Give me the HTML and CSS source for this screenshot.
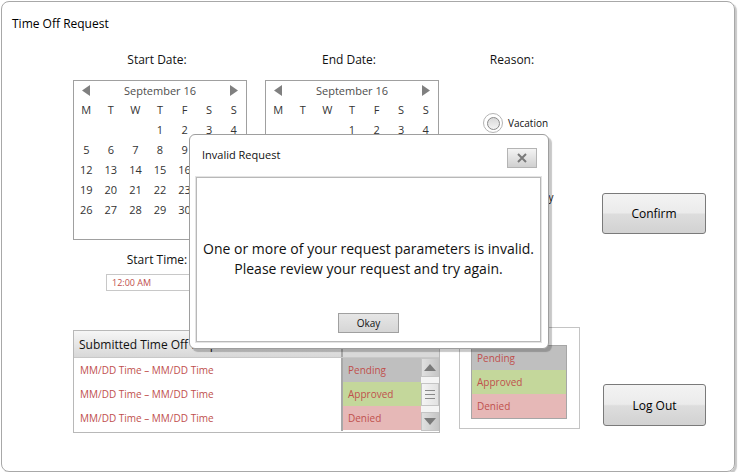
FILE: index.html
```html
<!DOCTYPE html>
<html>
<head>
<meta charset="utf-8">
<link rel="stylesheet" href="styles.css">
</head>
<body>
<div class="frame">
  <h1 class="title">Time Off Request</h1>
  <div class="top">
    <div class="datecol">
      <div class="label">Start Date:</div>
      <div class="cal">
        <div class="arrow"><svg width="8" height="11" viewBox="0 0 8 11"><polygon points="8,0 8,11 0,5.5" fill="#808080"/></svg></div>
        <div class="month">September 16</div>
        <div class="arrow"><svg width="8" height="11" viewBox="0 0 8 11"><polygon points="0,0 0,11 8,5.5" fill="#808080"/></svg></div>
        <span>M</span><span>T</span><span>W</span><span>T</span><span>F</span><span>S</span><span>S</span>
        <span></span><span></span><span></span><span>1</span><span>2</span><span>3</span><span>4</span>
        <span>5</span><span>6</span><span>7</span><span>8</span><span>9</span><span>10</span><span>11</span>
        <span>12</span><span>13</span><span>14</span><span>15</span><span>16</span><span>17</span><span>18</span>
        <span>19</span><span>20</span><span>21</span><span>22</span><span>23</span><span>24</span><span>25</span>
        <span>26</span><span>27</span><span>28</span><span>29</span><span>30</span>
      </div>
      <div class="label time-label">Start Time:</div>
      <div class="timebox">12:00 AM</div>
    </div>
    <div class="datecol second">
      <div class="label">End Date:</div>
      <div class="cal">
        <div class="arrow"><svg width="8" height="11" viewBox="0 0 8 11"><polygon points="8,0 8,11 0,5.5" fill="#808080"/></svg></div>
        <div class="month">September 16</div>
        <div class="arrow"><svg width="8" height="11" viewBox="0 0 8 11"><polygon points="0,0 0,11 8,5.5" fill="#808080"/></svg></div>
        <span>M</span><span>T</span><span>W</span><span>T</span><span>F</span><span>S</span><span>S</span>
        <span></span><span></span><span></span><span>1</span><span>2</span><span>3</span><span>4</span>
        <span>5</span><span>6</span><span>7</span><span>8</span><span>9</span><span>10</span><span>11</span>
        <span>12</span><span>13</span><span>14</span><span>15</span><span>16</span><span>17</span><span>18</span>
        <span>19</span><span>20</span><span>21</span><span>22</span><span>23</span><span>24</span><span>25</span>
        <span>26</span><span>27</span><span>28</span><span>29</span><span>30</span>
      </div>
      <div class="label time-label">End Time:</div>
      <div class="timebox">12:00 AM</div>
    </div>
    <div class="reason">
      <div class="label reason-label">Reason:</div>
      <div class="radio first"><span class="dot"></span><span class="rlabel">Vacation</span></div>
      <div class="radio second-radio"><span class="dot"></span><span class="rlabel wide">Sick Day</span></div>
    </div>
    <div class="actions">
      <button class="btn">Confirm</button>
    </div>
  </div>
  <div class="bottom">
    <div class="list">
      <div class="list-head">
        <div class="h-text">Submitted Time Off Requests</div>
        <div class="h-status"></div>
      </div>
      <div class="list-body">
        <div class="rows">
          <div class="row">MM/DD Time – MM/DD Time</div>
          <div class="row">MM/DD Time – MM/DD Time</div>
          <div class="row">MM/DD Time – MM/DD Time</div>
        </div>
        <div class="status">
          <div class="st pending">Pending</div>
          <div class="st approved">Approved</div>
          <div class="st denied">Denied</div>
        </div>
        <div class="scroll">
          <div class="sbtn"><svg width="12" height="7" viewBox="0 0 12 7"><polygon points="0,7 12,7 6,0" fill="#7a7a7a"/></svg></div>
          <div class="thumb"><i></i><i></i><i></i></div>
          <div class="sbtn"><svg width="12" height="7" viewBox="0 0 12 7"><polygon points="0,0 12,0 6,7" fill="#7a7a7a"/></svg></div>
        </div>
      </div>
    </div>
    <div class="legend">
      <div class="legend-rows">
        <div class="st pending">Pending</div>
        <div class="st approved">Approved</div>
        <div class="st denied">Denied</div>
      </div>
    </div>
    <div class="logout">
      <button class="btn btn-out">Log Out</button>
    </div>
  </div>

  <div class="dialog">
    <div class="dlg-head">
      <div class="dlg-title">Invalid Request</div>
      <button class="close"><svg width="10" height="10" viewBox="0 0 10 10"><path d="M1 1L9 9M9 1L1 9" stroke="#7a7a7a" stroke-width="2"/></svg></button>
    </div>
    <div class="dlg-panel">
      <p class="msg">One or more of your request parameters is invalid.<br>Please review your request and try again.</p>
      <button class="okay">Okay</button>
    </div>
  </div>
</div>
</body>
</html>
```
FILE: styles.css
```css
body {
  margin: 0;
  background: #fff;
  font-family: "Open Sans", "Noto Sans", sans-serif;
  color: #1a1a1a;
}
.frame {
  position: relative;
  box-sizing: border-box;
  margin: 1px 0 0 1px;
  width: 734px;
  height: 471px;
  border: 1px solid #a8a8a8;
  border-radius: 8px;
  box-shadow: 2px 2px 1px #c8c8c8;
}
.title {
  margin: 0;
  padding: 14px 0 0 10px;
  font-size: 12px;
  line-height: 16px;
  font-weight: normal;
  color: #000;
}
.top {
  display: flex;
  align-items: flex-start;
  margin-top: 20px;
  padding-left: 71px;
}
.datecol {
  width: 174px;
  display: flex;
  flex-direction: column;
  align-items: center;
}
.datecol.second {
  margin-left: 18px;
}
.label {
  font-size: 12px;
  line-height: 16px;
  padding-right: 6px;
  color: #111;
}
.reason-label {
  padding-right: 0;
  padding-left: 6px;
}
.cal {
  margin-top: 12px;
  box-sizing: border-box;
  width: 174px;
  height: 160px;
  border: 1px solid #a0a0a0;
  display: grid;
  grid-template-columns: repeat(7, 1fr);
  grid-template-rows: 18px;
  grid-auto-rows: 20px;
  font-size: 11px;
  color: #333;
}
.cal span, .cal .arrow, .cal .month {
  display: flex;
  align-items: center;
  justify-content: center;
}
.cal .month {
  grid-column: 2 / 7;
  color: #4d4d4d;
}
.time-label {
  margin-top: 12px;
}
.timebox {
  margin-top: 6px;
  box-sizing: border-box;
  width: 107px;
  height: 17px;
  border: 1px solid #c8c8c8;
  font-size: 9px;
  line-height: 15px;
  padding-left: 5px;
  color: #c0504d;
  margin-right: 1px;
}
.reason {
  margin-left: 31px;
  width: 78px;
  display: flex;
  flex-direction: column;
  align-items: center;
}
.radio {
  align-self: flex-start;
  margin-left: 13px;
  display: flex;
  align-items: center;
}
.radio.first {
  margin-top: 45px;
}
.radio.second-radio {
  margin-top: 54px;
}
.dot {
  box-sizing: border-box;
  width: 20px;
  height: 20px;
  border: 1px solid #b4b4b4;
  border-radius: 50%;
  background: #fff;
  display: flex;
  align-items: center;
  justify-content: center;
}
.dot::after {
  content: "";
  box-sizing: border-box;
  width: 13px;
  height: 13px;
  border: 1px solid #8a8a8a;
  border-radius: 50%;
  background: linear-gradient(#d8d8d8, #f4f4f4);
}
.rlabel {
  margin-left: 5px;
  font-size: 10px;
  color: #111;
  white-space: nowrap;
}
.rlabel.wide {
  margin-left: 12px;
}
.actions {
  margin-left: 54px;
  padding-top: 141px;
}
.btn {
  box-sizing: border-box;
  width: 104px;
  height: 41px;
  border: 1px solid #7a7a7a;
  border-radius: 3px;
  background: linear-gradient(#f3f3f3 0%, #ebebeb 48%, #dddddd 52%, #d2d2d2 100%);
  font-family: "Open Sans", "Noto Sans", sans-serif;
  font-size: 12px;
  color: #000;
  padding: 0;
}
.bottom {
  display: flex;
  align-items: flex-start;
  margin-top: 36px;
  padding-left: 71px;
}
.list {
  margin-top: 3px;
  box-sizing: border-box;
  width: 367px;
  height: 103px;
  border: 1px solid #b8b8b8;
}
.list-head {
  display: flex;
  height: 27px;
  box-sizing: border-box;
  border-bottom: 1px solid #c8c8c8;
  background: linear-gradient(#f6f6f6, #d8d8d8);
}
.h-text {
  width: 267px;
  font-size: 12px;
  line-height: 27px;
  padding-left: 5px;
  box-sizing: border-box;
  white-space: nowrap;
  overflow: hidden;
  color: #111;
}
.h-status {
  flex: 1;
  border-left: 2px solid #a8a8a8;
  background: #d9d9d9;
}
.list-body {
  display: flex;
}
.rows {
  width: 267px;
}
.row {
  height: 24px;
  line-height: 24px;
  padding-left: 6px;
  font-size: 10px;
  color: #c0504d;
}
.status {
  width: 78px;
  border-left: 2px solid #a8a8a8;
}
.st {
  height: 24px;
  line-height: 24px;
  padding-left: 5px;
  font-size: 10px;
  color: #c0504d;
}
.pending { background: #bfbfbf; }
.approved { background: #c4d79b; }
.denied { background: #e6b8b7; }
.scroll {
  width: 18px;
  height: 73px;
  display: flex;
  flex-direction: column;
  justify-content: space-between;
  background: #f4f4f4;
}
.sbtn {
  box-sizing: border-box;
  height: 19px;
  border: 1px solid #c4c4c4;
  background: linear-gradient(90deg, #e0e0e0, #c6c6c6);
  display: flex;
  align-items: center;
  justify-content: center;
}
.thumb {
  box-sizing: border-box;
  height: 23px;
  border: 1px solid #c4c4c4;
  background: linear-gradient(90deg, #f4f4f4, #e2e2e2);
  display: flex;
  flex-direction: column;
  align-items: center;
  justify-content: center;
  gap: 3px;
}
.thumb i {
  display: block;
  width: 10px;
  height: 1px;
  background: #8a8a8a;
}
.legend {
  margin-left: 19px;
  box-sizing: border-box;
  width: 121px;
  height: 102px;
  border: 1px solid #c4c4c4;
  padding: 17px 0 0 11px;
}
.legend-rows {
  width: 96px;
  box-sizing: border-box;
  border: 1px solid #a6a6a6;
}
.logout {
  margin-left: 23px;
  margin-top: 57px;
}
.btn-out {
  width: 103px;
  height: 42px;
}
.dialog {
  position: absolute;
  left: 187px;
  top: 132px;
  box-sizing: border-box;
  width: 360px;
  height: 215px;
  background: #fff;
  border: 1px solid #9e9e9e;
  border-radius: 6px;
  box-shadow: 3px 3px 1px rgba(0,0,0,0.22);
  display: flex;
  flex-direction: column;
}
.dlg-head {
  height: 42px;
  display: flex;
  justify-content: space-between;
  align-items: flex-start;
  padding: 12px 11px 0 12px;
  box-sizing: border-box;
}
.dlg-title {
  font-size: 11px;
  line-height: 16px;
  color: #111;
}
.close {
  margin-top: 1px;
  box-sizing: border-box;
  width: 30px;
  height: 20px;
  border: 1px solid #b4b4b4;
  background: linear-gradient(#f4f4f4, #d0d0d0);
  padding: 0;
  display: flex;
  align-items: center;
  justify-content: center;
}
.dlg-panel {
  margin-left: 6px;
  box-sizing: border-box;
  width: 345px;
  height: 165px;
  border: 1px solid #b8b8b8;
  box-shadow: 0 0 0 1px #e4e4e4;
  display: flex;
  flex-direction: column;
  align-items: center;
  padding-top: 61px;
}
.msg {
  margin: 0;
  font-size: 14px;
  line-height: 20px;
  text-align: center;
  color: #111;
}
.okay {
  margin-top: 34px;
  box-sizing: border-box;
  width: 61px;
  height: 20px;
  border: 1px solid #a0a0a0;
  background: linear-gradient(#e6e6e6, #d6d6d6);
  font-family: "Open Sans", "Noto Sans", sans-serif;
  font-size: 10px;
  color: #111;
  padding: 0;
}
```
